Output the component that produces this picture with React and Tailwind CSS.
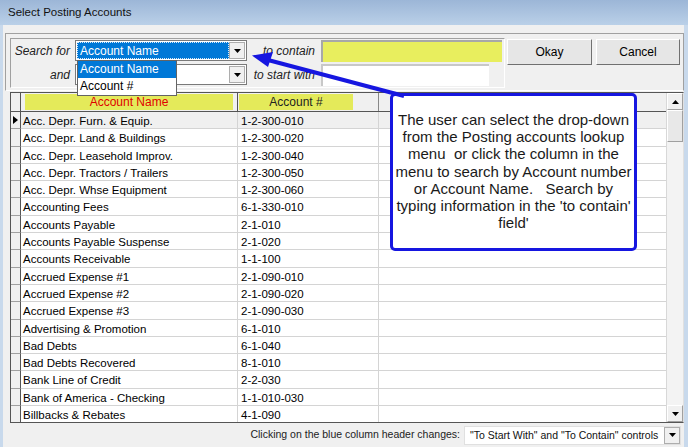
import React from 'react';

const rows = [
  ['Acc. Depr. Furn. & Equip.', '1-2-300-010'],
  ['Acc. Depr. Land & Buildings', '1-2-300-020'],
  ['Acc. Depr. Leasehold Improv.', '1-2-300-040'],
  ['Acc. Depr. Tractors / Trailers', '1-2-300-050'],
  ['Acc. Depr. Whse Equipment', '1-2-300-060'],
  ['Accounting Fees', '6-1-330-010'],
  ['Accounts Payable', '2-1-010'],
  ['Accounts Payable Suspense', '2-1-020'],
  ['Accounts Receivable', '1-1-100'],
  ['Accrued Expense #1', '2-1-090-010'],
  ['Accrued Expense #2', '2-1-090-020'],
  ['Accrued Expense #3', '2-1-090-030'],
  ['Advertising & Promotion', '6-1-010'],
  ['Bad Debts', '6-1-040'],
  ['Bad Debts Recovered', '8-1-010'],
  ['Bank Line of Credit', '2-2-030'],
  ['Bank of America - Checking', '1-1-010-030'],
  ['Billbacks & Rebates', '4-1-090'],
];

const calloutLines = [
  'The user can select the drop-down',
  'from the Posting accounts lookup',
  'menu  or click the column in the',
  'menu to search by Account number',
  'or Account Name.   Search by',
  "typing information in the 'to contain'",
  "field'",
];

const DropBtn = ({ h = 'h-full' }) => (
  <div className={`w-[16px] ${h} bg-[#f0f0f0] border border-[#adadad] flex items-center justify-center shrink-0`}>
    <svg width="7" height="4" viewBox="0 0 7 4">
      <path d="M0 0h7L3.5 4z" fill="#000" />
    </svg>
  </div>
);

const ScrollBtn = ({ up }) => (
  <div className="h-[17px] w-full bg-[#f0f0f0] border-t border-l border-white border-r border-b border-r-[#a0a0a0] border-b-[#a0a0a0] flex items-center justify-center shrink-0">
    <svg width="7" height="4" viewBox="0 0 7 4">
      <path d={up ? 'M0 4h7L3.5 0z' : 'M0 0h7L3.5 4z'} fill="#000" />
    </svg>
  </div>
);

export default function App() {
  return (
    <div
      className="relative w-[688px] h-[447px] overflow-hidden bg-[#f0f0f0] flex flex-col text-black"
      style={{ fontFamily: '"Liberation Sans", Arial, sans-serif' }}
    >
      {/* title bar */}
      <div className="h-[25px] shrink-0 bg-gradient-to-b from-[#9cb6d7] to-[#bad0e8] flex items-center pl-[8px] text-[11.5px] text-[#111]">
        Select Posting Accounts
      </div>

      <div className="flex-1 flex flex-col border-l-[3px] border-r-[4px] border-[#c8d9ec] bg-[#f0f0f0] pl-[2px] pt-[8px]">
        {/* top panel */}
        <div className="h-[58px] w-[679px] shrink-0 flex border border-t-[#a0a0a0] border-l-[#a0a0a0] border-r-[#a0a0a0] border-b-white">
          <div className="ml-[4px] mt-[4px] w-[495px] h-[50px] border border-t-[#a0a0a0] border-l-[#a0a0a0] border-r-white border-b-white flex flex-col pt-[1px] gap-[3px]">
            <div className="flex items-center h-[21px]">
              <div className="w-[64px] pr-[5px] text-right italic text-[12px] text-[#222]">Search for</div>
              <div className="w-[172px] h-[21px] flex bg-white border border-[#7a7a7a] p-px">
                <div className="flex-1 bg-[#0078d7] text-white text-[12px] leading-[17px] pl-[2px] border border-dotted border-[#d9e9f7]">Account Name</div>
                <DropBtn />
              </div>
              <div className="w-[74px] pr-[6px] text-right italic text-[12px] text-[#222]">to contain</div>
              <div className="w-[181px] h-[22px] bg-[#e8ee5e] border-t-2 border-l-2 border-[#a8a8a8]" />
            </div>
            <div className="flex items-center h-[21px]">
              <div className="w-[64px] pr-[5px] text-right italic text-[12px] text-[#222]">and</div>
              <div className="w-[172px] h-[21px] flex bg-white border border-[#7a7a7a] p-px">
                <div className="flex-1" />
                <DropBtn />
              </div>
              <div className="w-[74px] pr-[6px] text-right italic text-[12px] text-[#222] whitespace-nowrap">to start with</div>
              <div className="w-[168px] h-[22px] bg-white border-t-2 border-l-2 border-[#c8c8c8]" />
            </div>
          </div>
          <div className="flex gap-[4px] ml-[2px] mt-[5px]">
            <button className="w-[85px] h-[26px] bg-[#e6e6e6] border border-t-white border-l-white border-r-[#707070] border-b-[#707070] text-[12px]">Okay</button>
            <button className="w-[84px] h-[26px] bg-[#e6e6e6] border border-t-white border-l-white border-r-[#707070] border-b-[#707070] text-[12px]">Cancel</button>
          </div>
        </div>

        {/* grid */}
        <div className="mt-[1px] ml-[5px] w-[674px] h-[331px] shrink-0 flex bg-white border border-t-[#555] border-l-[#555] border-r-[#e0e0e0] border-b-[#555]">
          <div className="flex-1 flex flex-col overflow-hidden">
            <div className="h-[19px] shrink-0 flex bg-[#f0f0f0] border-b border-[#555] text-[12px]">
              <div className="w-[10px] border-r border-[#555]" />
              <div className="w-[217px] border-r border-[#555] px-[4px] py-[1px]">
                <div className="h-full bg-[#e4ea5a] text-[#e00000] text-center leading-[17px]">Account Name</div>
              </div>
              <div className="w-[141px] border-r border-[#888] pl-[1px] pr-[25px] py-[1px]">
                <div className="h-full bg-[#e4ea5a] text-[#222] text-center leading-[17px]">Account #</div>
              </div>
              <div className="flex-1" />
            </div>
            {rows.map(([name, num], i) => (
              <div key={name} className={`h-[17.3px] shrink-0 flex text-[11.5px] leading-[18px] ${i === 0 ? 'bg-[#f0f0f0]' : ''}`}>
                <div className="w-[10px] bg-[#f0f0f0] border-r border-b border-r-[#555] border-b-[#a0a0a0] flex items-center">
                  {i === 0 && (
                    <svg width="5" height="8" viewBox="0 0 5 8" className="ml-[2px]">
                      <path d="M0 0v8l5-4z" fill="#000" />
                    </svg>
                  )}
                </div>
                <div className="w-[217px] border-r border-b border-[#d4d4d4] pl-[2px] whitespace-nowrap">{name}</div>
                <div className="w-[141px] border-r border-b border-[#d4d4d4] pl-[3px]">{num}</div>
                <div className="flex-1 border-b border-[#d4d4d4]" />
              </div>
            ))}
          </div>
          <div className="w-[17px] shrink-0 flex flex-col bg-[#f3f3f3] border-l border-[#d8d8d8]">
            <ScrollBtn up />
            <div className="h-[32px] w-full bg-[#e8e8e8] border border-t-white border-l-white border-r-[#a0a0a0] border-b-[#a0a0a0]" />
            <div className="flex-1" />
            <ScrollBtn />
          </div>
        </div>

        {/* footer */}
        <div className="flex-1 flex items-center justify-end pr-[3px]">
          <div className="text-[10.5px] text-[#222] mr-[4px]">Clicking on the blue column header changes:</div>
          <div className="w-[217px] h-[19px] flex bg-white border border-[#e0e0e0]">
            <div className="flex-1 text-[10.5px] leading-[17px] pl-[5px] text-[#111] whitespace-nowrap">"To Start With" and "To Contain" controls</div>
            <DropBtn />
          </div>
        </div>
      </div>

      {/* dropdown list */}
      <div className="absolute left-[77px] top-[60px] w-[100px] h-[36px] bg-white border border-[#646464] text-[12px] leading-[17px]">
        <div className="bg-[#0078d7] text-white pl-[2px]">Account Name</div>
        <div className="pl-[2px]">Account #</div>
      </div>

      {/* callout */}
      <div className="absolute left-[390px] top-[93px] w-[247px] h-[158px] bg-white border-[3px] border-[#1616e0] rounded-[5px] pt-[15px] text-center text-[15px] leading-[17.2px] text-[#1a1a1a]">
        {calloutLines.map((l) => (
          <div key={l} className="whitespace-pre">{l}</div>
        ))}
      </div>

      {/* arrow */}
      <svg className="absolute left-0 top-0 pointer-events-none" width="688" height="447">
        <line x1="268" y1="60" x2="404" y2="96" stroke="#1616e0" strokeWidth="4" />
        <path d="M252 55.5 L273 52 L268 67 Z" fill="#1616e0" />
      </svg>
    </div>
  );
}
